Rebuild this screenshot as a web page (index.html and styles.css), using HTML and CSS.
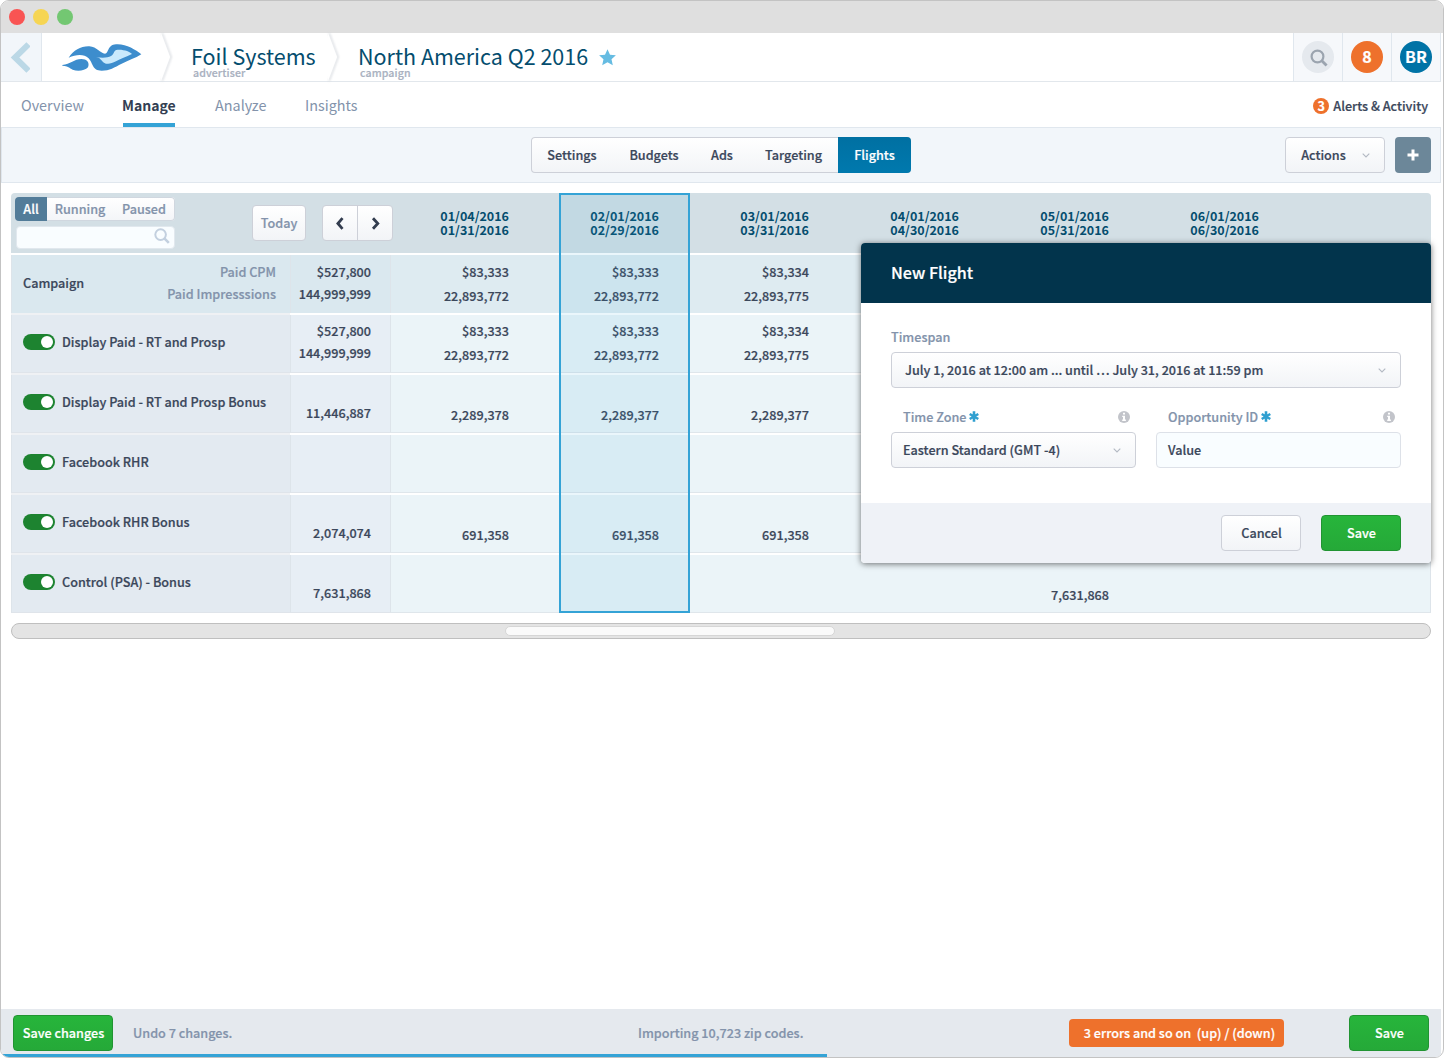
FILE: index.html
```html
<!DOCTYPE html>
<html lang="en">
<head>
  <meta charset="UTF-8" />
  <meta name="viewport" content="width=device-width, initial-scale=1.0"/>
  <title>North America Q2 2016 - Flights</title>
  <link rel="stylesheet" href="styles.css">
</head>
<body>
  <div class="window">
    <div class="titlebar">
      <span class="dot red"></span>
      <span class="dot yellow"></span>
      <span class="dot green"></span>
    </div>

    <div class="content">
      <header class="topbar">
        <a class="back">
          <svg width="20" height="31" viewBox="0 0 20 31"><path d="M18.5 2.3 L5 15.5 L18.5 28.7" fill="none" stroke="#bbd8e6" stroke-width="6"/></svg>
        </a>
        <div class="logo">
          <svg width="80" height="29" viewBox="183 130 240 87">
            <path fill="#3d8dcd" d="M203 174 C218 151 240 139 265 140 C288 141 297 161 312 162 C324 162 318 136 345 134 C375 132 403 150 421 164 C402 176 384 181 362 192 C340 203 326 213 302 213 C273 213 277 190 262 175 C250 163 226 163 203 174 Z"/>
            <path fill="#3d8dcd" d="M184 196 C208 194 220 178 241 178 C257 178 267 188 261 203 C252 213 230 216 215 210 C205 205 202 199 184 198 Z"/>
            <path fill="#c9e9fc" d="M283 171 C303 176 320 174 330 169 C341 162 337 151 350 150 C370 149 387 156 393 163 C376 171 358 178 345 185 C330 193 318 195 309 189 C300 183 300 174 283 171 Z"/>
          </svg>
        </div>
        <svg class="crumb-arrow" width="14" height="48" viewBox="0 0 14 48"><path class="crumb-shade" d="M1 0 L10 24 L1 48"/><path class="crumb-face" d="M0 0 L9 24 L0 48"/></svg>
        <div class="crumb advertiser">
          <div class="crumb-name">Foil Systems</div>
          <div class="crumb-type">advertiser</div>
        </div>
        <svg class="crumb-arrow" width="14" height="48" viewBox="0 0 14 48"><path class="crumb-shade" d="M1 0 L10 24 L1 48"/><path class="crumb-face" d="M0 0 L9 24 L0 48"/></svg>
        <div class="crumb campaign">
          <div class="crumb-name">North America Q2 2016</div>
          <div class="crumb-type">campaign</div>
        </div>
        <svg class="star" width="17" height="17" viewBox="0 0 17 17"><path fill="#66bce2" d="M8.5 0.3 L11 5.7 L16.9 6.3 L12.5 10.3 L13.8 16.2 L8.5 13.2 L3.2 16.2 L4.5 10.3 L0.1 6.3 L6 5.7 Z"/></svg>
        <div class="tools">
          <div class="tool"><span class="circle find">
            <svg width="18" height="18" viewBox="0 0 18 18"><circle cx="7.5" cy="7.5" r="5.9" fill="none" stroke="#9ba4af" stroke-width="2.2"/><path d="M11.8 11.8 L16.6 16.6" stroke="#9ba4af" stroke-width="2.8"/></svg>
          </span></div>
          <div class="tool"><span class="circle count">8</span></div>
          <div class="tool"><span class="circle user">BR</span></div>
        </div>
      </header>

      <nav class="tabs">
        <a class="tab overview">Overview</a>
        <a class="tab manage active">Manage</a>
        <a class="tab analyze">Analyze</a>
        <a class="tab insights">Insights</a>
        <div class="alerts"><span class="badge">3</span>Alerts &amp; Activity</div>
      </nav>

      <div class="subbar">
        <div class="segmented">
          <a>Settings</a>
          <a>Budgets</a>
          <a>Ads</a>
          <a>Targeting</a>
          <a class="on">Flights</a>
        </div>
        <div class="subbar-right">
          <a class="btn actions">Actions
            <svg width="8" height="5" viewBox="0 0 8 5"><path d="M0.7 0.7 L4 4 L7.3 0.7" fill="none" stroke="#b3b9c3" stroke-width="1.1"/></svg>
          </a>
          <a class="add">
            <svg width="12" height="12" viewBox="0 0 12 12"><path d="M6 0.5 V11.5 M0.5 6 H11.5" stroke="#fff" stroke-width="3"/></svg>
          </a>
        </div>
      </div>

      <section class="flights">
        <div class="row head">
          <div class="controls">
            <div class="filter">
              <div class="states"><a class="on">All</a><a>Running</a><a>Paused</a></div>
              <div class="search">
                <svg width="16" height="16" viewBox="0 0 16 16"><circle cx="6.6" cy="6.6" r="5.3" fill="none" stroke="#c3d0df" stroke-width="2"/><path d="M10.4 10.4 L14.8 14.8" stroke="#c3d0df" stroke-width="2.6"/></svg>
              </div>
            </div>
            <a class="btn today">Today</a>
            <div class="pager">
              <a><svg width="9" height="13" viewBox="0 0 9 13"><path d="M6.5 1.2 L1.9 6.5 L6.5 11.8" fill="none" stroke="#333d4f" stroke-width="2.8"/></svg></a>
              <a><svg width="9" height="13" viewBox="0 0 9 13"><path d="M2 1.2 L6.8 6.5 L2 11.8" fill="none" stroke="#333d4f" stroke-width="2.8"/></svg></a>
            </div>
          </div>
          <div class="month">01/04/2016<br>01/31/2016</div>
          <div class="month">02/01/2016<br>02/29/2016</div>
          <div class="month">03/01/2016<br>03/31/2016</div>
          <div class="month">04/01/2016<br>04/30/2016</div>
          <div class="month">05/01/2016<br>05/31/2016</div>
          <div class="month">06/01/2016<br>06/30/2016</div>
          <div></div>
        </div>

        <div class="row sum">
          <div class="name">Campaign <div class="metrics">Paid CPM<br>Paid Impresssions</div></div>
          <div class="total">$527,800<br>144,999,999</div>
          <div class="cell">$83,333<br>22,893,772</div>
          <div class="cell">$83,333<br>22,893,772</div>
          <div class="cell">$83,334<br>22,893,775</div>
          <div class="cell"></div>
          <div class="cell"></div>
          <div class="cell"></div>
          <div class="cell"></div>
        </div>

        <div class="row">
          <div class="name"><span class="toggle"></span>Display Paid - RT and Prosp</div>
          <div class="total">$527,800<br>144,999,999</div>
          <div class="cell">$83,333<br>22,893,772</div>
          <div class="cell">$83,333<br>22,893,772</div>
          <div class="cell">$83,334<br>22,893,775</div>
          <div class="cell"></div>
          <div class="cell"></div>
          <div class="cell"></div>
          <div class="cell"></div>
        </div>

        <div class="row">
          <div class="name"><span class="toggle"></span>Display Paid - RT and Prosp Bonus</div>
          <div class="total">11,446,887</div>
          <div class="cell">2,289,378</div>
          <div class="cell">2,289,377</div>
          <div class="cell">2,289,377</div>
          <div class="cell"></div>
          <div class="cell"></div>
          <div class="cell"></div>
          <div class="cell"></div>
        </div>

        <div class="row">
          <div class="name"><span class="toggle"></span>Facebook RHR</div>
          <div class="total"></div>
          <div class="cell"></div>
          <div class="cell"></div>
          <div class="cell"></div>
          <div class="cell"></div>
          <div class="cell"></div>
          <div class="cell"></div>
          <div class="cell"></div>
        </div>

        <div class="row">
          <div class="name"><span class="toggle"></span>Facebook RHR Bonus</div>
          <div class="total">2,074,074</div>
          <div class="cell">691,358</div>
          <div class="cell">691,358</div>
          <div class="cell">691,358</div>
          <div class="cell"></div>
          <div class="cell"></div>
          <div class="cell"></div>
          <div class="cell"></div>
        </div>

        <div class="row last">
          <div class="name"><span class="toggle"></span>Control (PSA) - Bonus</div>
          <div class="total">7,631,868</div>
          <div class="cell"></div>
          <div class="cell"></div>
          <div class="cell"></div>
          <div class="cell"></div>
          <div class="cell">7,631,868</div>
          <div class="cell"></div>
          <div class="cell"></div>
        </div>

        <div class="current-month"></div>

        <!-- new flight popover, sits over the grid -->
        <div class="modal">
          <div class="modal-head">New Flight</div>
          <div class="modal-body">
            <div class="field">
              <label class="flush">Timespan</label>
              <div class="select timespan">July 1, 2016 at 12:00 am ... until … July 31, 2016 at 11:59 pm
                <svg width="8" height="5" viewBox="0 0 8 5"><path d="M0.7 0.7 L4 4 L7.3 0.7" fill="none" stroke="#b3b9c3" stroke-width="1.1"/></svg>
              </div>
            </div>
            <div class="pair">
              <div class="field">
                <label>Time Zone
                  <svg class="req" width="10" height="11" viewBox="0 0 10 11"><path d="M5 0.3 V10.7 M0.7 3 L9.3 8 M9.3 3 L0.7 8" stroke="#2f9fd0" stroke-width="2.6"/></svg>
                  <svg class="info" width="12" height="12" viewBox="0 0 12 12"><circle cx="6" cy="6" r="6" fill="#c2c4ca"/><path d="M5 1.8 H7 V3.6 H5 Z M4.2 4.8 H7 V8.6 H7.9 V10 H4.2 V8.6 H5 V6.1 H4.2 Z" fill="#fff"/></svg>
                </label>
                <div class="select">Eastern Standard (GMT -4)
                  <svg width="8" height="5" viewBox="0 0 8 5"><path d="M0.7 0.7 L4 4 L7.3 0.7" fill="none" stroke="#b3b9c3" stroke-width="1.1"/></svg>
                </div>
              </div>
              <div class="field">
                <label>Opportunity ID
                  <svg class="req" width="10" height="11" viewBox="0 0 10 11"><path d="M5 0.3 V10.7 M0.7 3 L9.3 8 M9.3 3 L0.7 8" stroke="#2f9fd0" stroke-width="2.6"/></svg>
                  <svg class="info" width="12" height="12" viewBox="0 0 12 12"><circle cx="6" cy="6" r="6" fill="#c2c4ca"/><path d="M5 1.8 H7 V3.6 H5 Z M4.2 4.8 H7 V8.6 H7.9 V10 H4.2 V8.6 H5 V6.1 H4.2 Z" fill="#fff"/></svg>
                </label>
                <div class="input">Value</div>
              </div>
            </div>
          </div>
          <div class="modal-foot">
            <a class="btn">Cancel</a>
            <a class="btn save">Save</a>
          </div>
        </div>
      </section>

      <div class="scrollbar"><div class="thumb"></div></div>

      <footer class="footer">
        <div class="footer-row">
          <a class="btn save changes">Save changes</a>
          <span class="undo">Undo 7 changes.</span>
          <span class="status">Importing 10,723 zip codes.</span>
          <span class="errors">3 errors and so on &nbsp;(up) / (down)</span>
          <a class="btn save">Save</a>
        </div>
        <div class="progress"></div>
      </footer>
    </div>
  </div>
</body>
</html>
```
FILE: styles.css
```css
* {
  box-sizing: border-box;
}

body {
  margin: 0;
  background: #fff;
  color: #3b475b;
  font-family: "Noto Sans CJK SC", "Open Sans", sans-serif;
  font-size: 12.63px;
  font-weight: 500;
  line-height: 20px;
  -webkit-text-stroke: 0.2px;
}

svg {
  display: block;
  flex: none;
}

.window {
  width: 1444px;
  height: 1058px;
  border: 1px solid #c3c3c3;
  border-radius: 9px;
  overflow: hidden;
  display: flex;
  flex-direction: column;
}

.titlebar {
  height: 32px;
  flex: none;
  background: #dfdfdf;
  display: flex;
  align-items: center;
  gap: 8px;
  padding-left: 8px;
}

.dot {
  width: 16px;
  height: 16px;
  border-radius: 50%;
}

.red { background: #f95453; }
.yellow { background: #f6d553; }
.green { background: #73c772; }

.content {
  flex: 1;
  width: 1440px;
  display: flex;
  flex-direction: column;
}

/* top bar */
.topbar {
  height: 49px;
  display: flex;
  border-bottom: 1px solid #e2e7ec;
}

.back {
  width: 41px;
  padding: 9px 0 0 9px;
  background: #f2f6fa;
  border-right: 1px solid #e0e7ee;
}

.logo {
  width: 119px;
  padding: 10px 0 0 20px;
}

.crumb-arrow {
  overflow: visible;
}

.crumb-shade {
  fill: none;
  stroke: #d4d8dd;
  stroke-width: 1.5;
  filter: blur(1.2px);
}

.crumb-face {
  fill: #fff;
}

.crumb-name {
  margin-top: 13px;
  font-size: 21.5px;
  font-weight: 400;
  line-height: 20px;
  color: #044d6e;
  white-space: nowrap;
  -webkit-text-stroke: 0;
}

.crumb-type {
  margin: 1px 0 0 2px;
  font-size: 10.6px;
  line-height: 12px;
  color: #a9b1bf;
  letter-spacing: 0.1px;
}

.advertiser {
  width: 153px;
  padding-left: 16px;
}

.campaign {
  padding-left: 16px;
}

.star {
  margin: 16px 0 0 11px;
}

.tools {
  margin-left: auto;
  display: flex;
}

.tool {
  width: 49px;
  border-left: 1px solid #e0e7ee;
  background: #f6f8fb;
  display: flex;
  align-items: center;
  justify-content: center;
}

.tool:last-child {
  width: 50px;
  border-right: 1px solid #e0e7ee;
}

.circle {
  width: 32px;
  height: 32px;
  border-radius: 50%;
  display: flex;
  align-items: center;
  justify-content: center;
  color: #fff;
  font-size: 16px;
  font-weight: 700;
  line-height: 30px;
  padding-bottom: 2px;
}

.find {
  padding: 1px 0 0 1px;
  background: #e5e9ee;
}

.count { background: #ee712c; }
.user { background: #0073a6; }

/* tabs */
.tabs {
  height: 45px;
  display: flex;
  padding-left: 20px;
}

.tab {
  height: 45px;
  line-height: 46px;
  font-size: 14.4px;
  font-weight: 400;
  color: #8393ab;
  -webkit-text-stroke: 0;
}

.overview { width: 102px; }
.analyze { width: 90px; }

.manage {
  width: 52px;
  margin-right: 40px;
  text-indent: -1px;
}

.active {
  color: #343f53;
  font-size: 14px;
  font-weight: 700;
  border-bottom: 4px solid #34a3d6;
}

.alerts {
  margin-left: auto;
  padding: 2px 13px 0 0;
  display: flex;
  align-items: center;
  gap: 4px;
}

.badge {
  width: 16px;
  height: 16px;
  border-radius: 50%;
  background: #ee712c;
  color: #fff;
  font-weight: 700;
  line-height: 15px;
  text-align: center;
}

/* sub navigation */
.subbar {
  height: 56px;
  background: #f2f6fa;
  border: 1px solid #e0e7ee;
  display: grid;
  grid-template-columns: 1fr 380px 1fr;
  align-items: center;
}

.segmented {
  grid-column: 2;
  height: 36px;
  display: grid;
  grid-template-columns: 82px 82px 54px 89px 73px;
  border-radius: 4px;
  overflow: hidden;
  background: linear-gradient(#fff, #f2f4f7);
  box-shadow: inset 0 0 0 1px #cdd0d8;
}

.segmented a {
  line-height: 36px;
  text-align: center;
}

.segmented .on {
  background: linear-gradient(#0070a2, #0079ae);
  color: #fff;
}

.subbar-right {
  display: flex;
  justify-content: flex-end;
  gap: 10px;
  padding-right: 9px;
}

.btn {
  flex: none;
  height: 36px;
  border: 1px solid #cdd0d8;
  border-radius: 4px;
  background: linear-gradient(#fff, #f2f4f7);
  display: flex;
  align-items: center;
  justify-content: center;
  white-space: nowrap;
}

.actions {
  width: 100px;
  gap: 16px;
  padding-left: 1px;
}

.add {
  width: 36px;
  height: 36px;
  border-radius: 4px;
  background: #6c8799;
  display: flex;
  align-items: center;
  justify-content: center;
}

/* flights grid */
.flights {
  position: relative;
  width: 1420px;
  margin: 10px 0 0 10px;
  border-radius: 4px 4px 0 0;
}

.row {
  height: 60px;
  display: grid;
  grid-template-columns: 279px 100px repeat(6, 150px) 1fr;
  border-bottom: 2px solid #fff;
}

.head {
  height: 62px;
  background: #d3dfe5;
  border-radius: 4px 4px 0 0;
}

.controls {
  grid-column: span 2;
  display: flex;
  align-items: flex-start;
  padding: 4px 0 0 4px;
}

.filter {
  flex: none;
  width: 160px;
}

.states {
  height: 24px;
  display: flex;
  border-radius: 4px;
  overflow: hidden;
  background: linear-gradient(#fff, #f3f5f8);
  box-shadow: inset 0 0 0 1px #d0d7df;
  color: #8393ab;
  line-height: 24px;
}

.states a {
  width: 64px;
  padding-left: 2px;
  text-align: center;
}

.states a.on {
  width: 32px;
  padding: 0;
  background: #527c99;
  color: #fff;
}

.search {
  height: 23px;
  margin: 5px 0 0 1px;
  border-radius: 4px;
  background: #f9fdff;
  border: 1px solid #e1e8ee;
  display: flex;
  align-items: center;
  justify-content: flex-end;
  padding: 0 4px 3px 0;
}

.today {
  width: 54px;
  margin: 8px 0 0 77px;
  color: #8393ab;
}

.pager {
  flex: none;
  width: 71px;
  height: 36px;
  margin: 8px 0 0 16px;
  display: flex;
  border: 1px solid #cdd0d8;
  border-radius: 4px;
  background: linear-gradient(#fff, #f2f4f7);
}

.pager a {
  flex: 1;
  display: flex;
  align-items: center;
  justify-content: center;
}

.pager a + a {
  border-left: 1px solid #cdd0d8;
}

.month {
  padding: 16px 31px 0 0;
  font-size: 12.5px;
  font-weight: 700;
  line-height: 14px;
  text-align: right;
  color: #044d6e;
  -webkit-text-stroke: 0;
}

.name {
  background: #e3eaf1;
  border-left: 1px solid #dde4ea;
  border-bottom: 1px solid #dfe4ea;
  display: flex;
  align-items: center;
  padding: 0 15px 3px 11px;
  box-shadow: 0 2px #eff1f4;
}

.total,
.cell {
  display: flex;
  flex-direction: column;
  justify-content: flex-end;
  text-align: right;
}

.total {
  padding: 0 19px 8px 0;
  line-height: 22px;
  background: #e7eef5;
  border-left: 1px solid #dde4ea;
  border-bottom: 1px solid #dfe4ea;
}

.cell {
  padding: 0 31px 5px 0;
  line-height: 24px;
  background: #ebf4f8;
  border-bottom: 1px solid #dfe6eb;
}

.total + .cell {
  border-left: 1px solid #dde4ea;
}

.row .cell:last-child {
  border-right: 1px solid #dde4ea;
}

.sum .name,
.sum .total {
  background: #dae8ef;
  border-bottom: 0;
}

.sum .name {
  padding: 0 14px 2px 11px;
}

.sum .cell {
  background: #deebf1;
  border-bottom: 0;
}

.last {
  height: 58px;
  border-bottom: 0;
}

.last .name {
  box-shadow: none;
}

.metrics {
  margin-left: auto;
  line-height: 22px;
  text-align: right;
  color: #8393ab;
}

.toggle {
  width: 32px;
  height: 16px;
  margin-right: 7px;
  padding: 2px;
  border-radius: 8px;
  background: #1d8330;
}

.toggle::after {
  content: "";
  display: block;
  width: 12px;
  height: 12px;
  margin-left: 16px;
  border-radius: 50%;
  background: #fff;
}

.current-month {
  position: absolute;
  top: 0;
  left: 548px;
  width: 131px;
  height: 420px;
  border: 2px solid #34a3d6;
  background: rgba(52, 163, 214, 0.1);
}

/* modal */
.modal {
  position: absolute;
  top: 50px;
  left: 850px;
  width: 570px;
  height: 320px;
  border-radius: 4px;
  overflow: hidden;
  background: #fff;
  box-shadow: 0 1px 6px rgba(0, 0, 0, 0.55);
}

.modal-head {
  height: 60px;
  padding-left: 30px;
  background: #02344c;
  color: #fff;
  font-size: 16.1px;
  line-height: 59px;
}

.modal-body {
  height: 200px;
  padding: 24px 30px 0;
}

.field label {
  height: 25px;
  padding: 0 6px 0 12px;
  display: flex;
  align-items: flex-start;
  color: #8393ab;
}

.field label.flush {
  padding-left: 0;
}

.req {
  margin: 4px 0 0 3px;
}

.info {
  margin: 4px 0 0 auto;
}

.select,
.input {
  height: 36px;
  padding: 0 14px 0 11px;
  border: 1px solid #cdd0d8;
  border-radius: 4px;
  background: linear-gradient(#fff, #f2f4f7);
  display: flex;
  align-items: center;
  justify-content: space-between;
  white-space: nowrap;
}

.timespan {
  padding-left: 13px;
}

.input {
  background: #f9fdff;
  border-color: #dde1e8;
}

.pair {
  display: grid;
  grid-template-columns: 1fr 1fr;
  gap: 20px;
  margin-top: 19px;
}

.modal-foot {
  height: 60px;
  padding: 12px 30px;
  background: #eff2f7;
  display: flex;
  justify-content: flex-end;
  gap: 20px;
}

.modal-foot .btn {
  width: 80px;
  padding-left: 1px;
}

.save,
.modal-foot .save {
  width: 80px;
  padding-left: 1px;
  color: #fff;
  border-color: #219432;
  background: linear-gradient(#27b53b, #25a938);
}

/* scrollbar */
.scrollbar {
  width: 1420px;
  height: 16px;
  margin: 10px 0 0 10px;
  border: 1px solid #bfbfbf;
  border-radius: 8px;
  background: #e4e4e4;
  padding: 2px 0 0 493px;
}

.thumb {
  width: 330px;
  height: 10px;
  border: 1px solid #d6d6d6;
  border-radius: 5px;
  background: #fafafa;
}

/* footer */
.footer {
  margin-top: auto;
  height: 48px;
  background: #e5e9ee;
  color: #8393ab;
}

.footer-row {
  height: 45px;
  display: flex;
  align-items: center;
  padding: 3px 12px 0;
}

.footer .changes {
  width: 100px;
}

.undo {
  width: 525px;
  padding-left: 20px;
}

.errors {
  width: 215px;
  height: 28px;
  margin: 0 65px 0 auto;
  border-radius: 4px;
  background: #ee712c;
  color: #fff;
  line-height: 28px;
  text-align: center;
  padding-left: 6px;
}

.progress {
  width: 826px;
  height: 3px;
  background: #34a3d6;
}
```
